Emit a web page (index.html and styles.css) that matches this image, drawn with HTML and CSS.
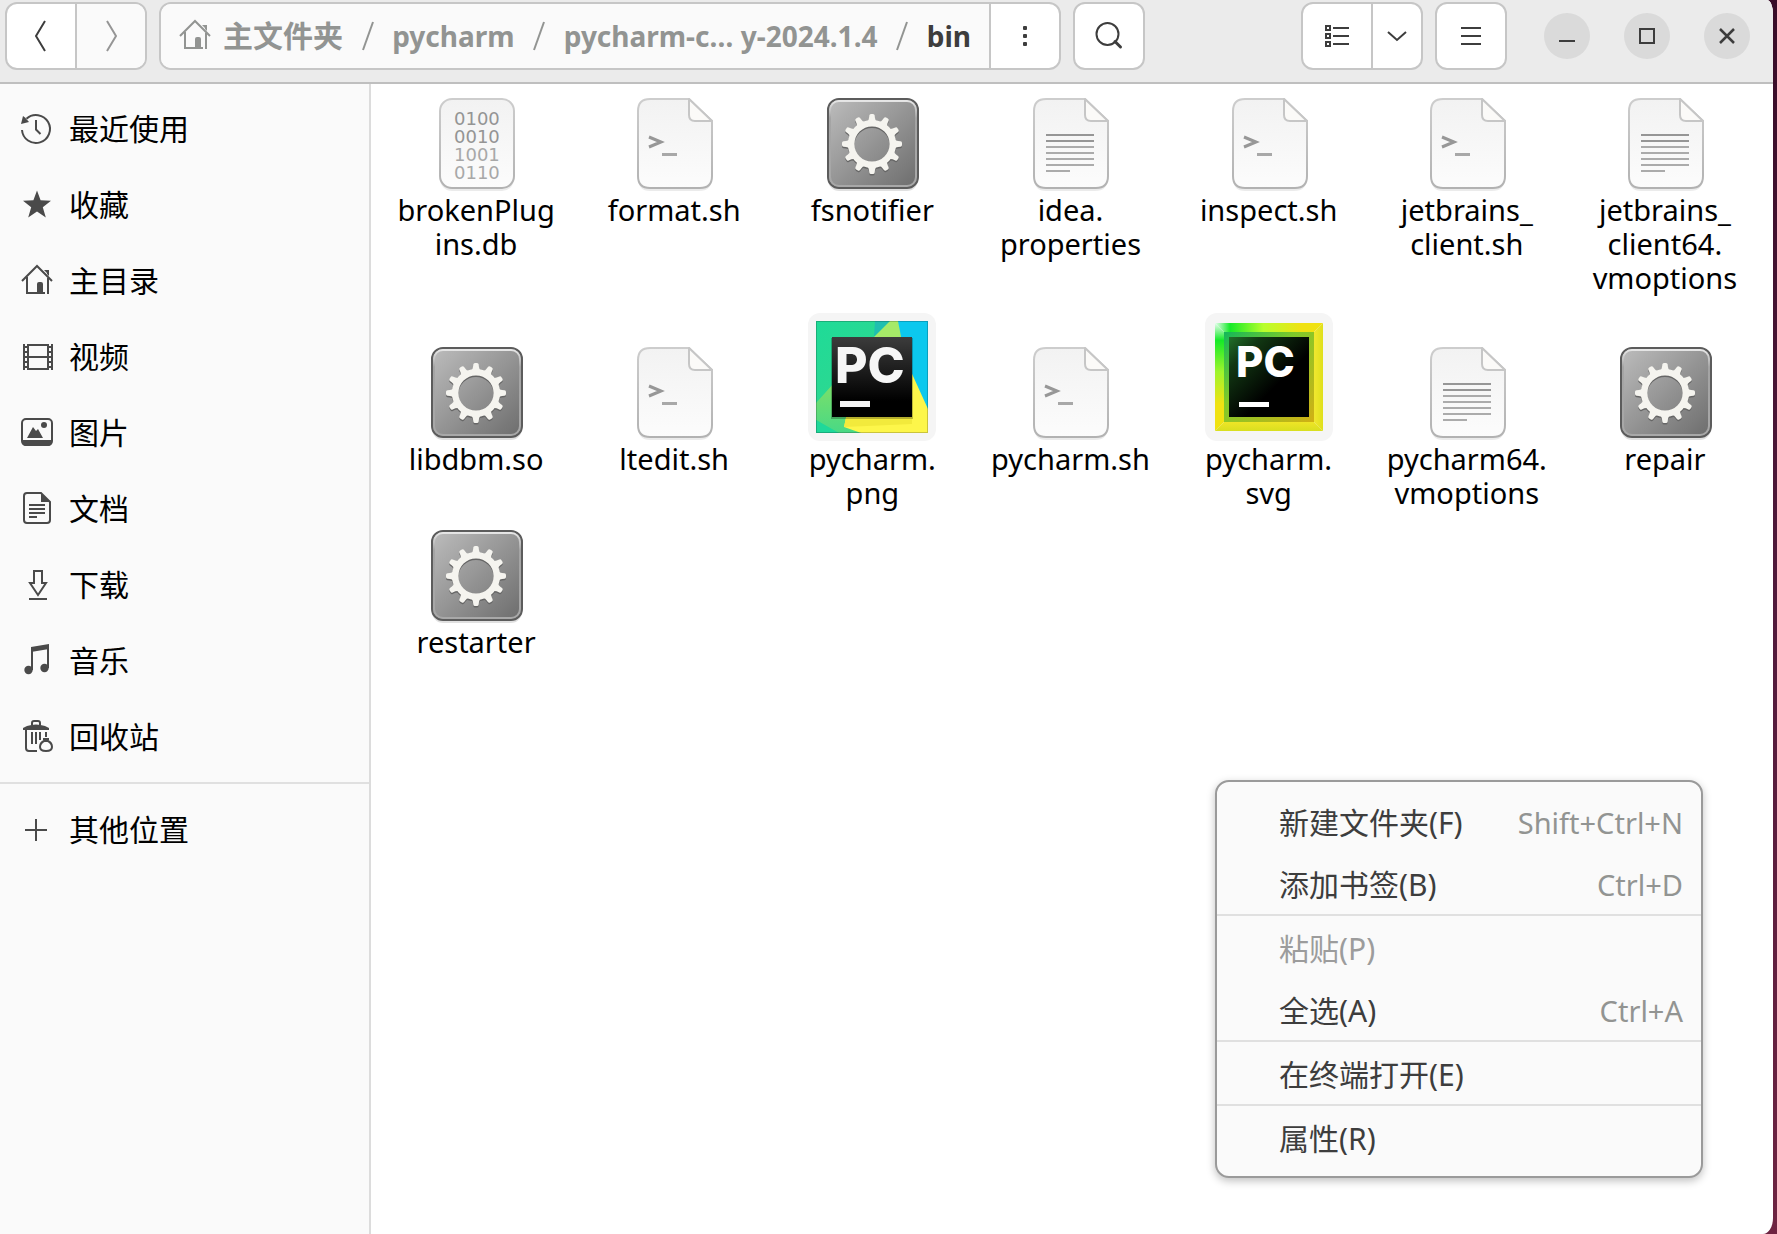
FILE: index.html
```html
<!DOCTYPE html>
<html lang="zh-CN">
<head>
<meta charset="utf-8">
<title>bin</title>
<link rel="stylesheet" href="styles.css">
</head>
<body>
<svg class="defs" aria-hidden="true">
  <defs>
    <linearGradient id="paper" x1="0" y1="0" x2="0" y2="1"><stop offset="0" stop-color="#f2f2f2"/><stop offset="1" stop-color="#fcfcfc"/></linearGradient>
    <linearGradient id="edge" x1="0" y1="0" x2="0" y2="1"><stop offset="0" stop-color="#cdcdcd"/><stop offset="1" stop-color="#b2b2b2"/></linearGradient>
    <linearGradient id="metal" x1="0" y1="0" x2="1" y2="1"><stop offset="0" stop-color="#bdbdbd"/><stop offset="1" stop-color="#6c6c6c"/></linearGradient>
    <linearGradient id="rim" x1="0" y1="0" x2="0" y2="1"><stop offset="0" stop-color="#e6e6e6"/><stop offset="0.2" stop-color="#a4a4a4"/><stop offset="1" stop-color="#a8a8a8"/></linearGradient>
    <linearGradient id="black" x1="0" y1="0" x2="0" y2="1"><stop offset="0" stop-color="#3c3c3c"/><stop offset="0.8" stop-color="#000"/></linearGradient>
    <linearGradient id="green" x1="0" y1="0" x2="1" y2="1"><stop offset="0" stop-color="#1edb98"/><stop offset="1" stop-color="#3fd488"/></linearGradient>
    <linearGradient id="lime" x1="0" y1="0" x2="0" y2="1"><stop offset="0" stop-color="#7ddf68"/><stop offset="1" stop-color="#48d985"/></linearGradient>
    <linearGradient id="frameTop" x1="0" y1="0" x2="1" y2="0"><stop offset="0" stop-color="#e8fff0"/><stop offset="0.14" stop-color="#14ea28"/><stop offset="0.45" stop-color="#b8ff2c"/><stop offset="0.8" stop-color="#f0e212"/></linearGradient>
    <linearGradient id="frameLeft" x1="0" y1="0" x2="0" y2="1"><stop offset="0" stop-color="#e8fff0"/><stop offset="0.16" stop-color="#14ea28"/><stop offset="0.45" stop-color="#9df52c"/><stop offset="0.75" stop-color="#f0e212"/></linearGradient>
    <linearGradient id="frameRight" x1="0" y1="0" x2="1" y2="0"><stop offset="0" stop-color="#fbec3a"/><stop offset="1" stop-color="#dfe01c"/></linearGradient>
    <linearGradient id="frameBottom" x1="0" y1="0" x2="0" y2="1"><stop offset="0" stop-color="#fbe82a"/><stop offset="1" stop-color="#d8df20"/></linearGradient>
    <linearGradient id="innerFrame" x1="0" y1="0" x2="1" y2="1"><stop offset="0" stop-color="#12b85a"/><stop offset="0.4" stop-color="#7fca2a"/><stop offset="1" stop-color="#d2b014"/></linearGradient>
    <linearGradient id="forest" x1="0" y1="0" x2="1" y2="1"><stop offset="0" stop-color="#22702a"/><stop offset="0.2" stop-color="#123813"/><stop offset="0.6" stop-color="#000"/></linearGradient>
  </defs>

  <symbol id="i-recent" viewBox="0 -2 34 34"><path d="M2 16a14 14 0 1 0 4.500-11.300" fill="none" stroke="currentColor" stroke-width="2"/><path d="M1 10 3 2l2 1.500L9 8z"/><path d="M16 6v9.500l4.500 4.500" fill="none" stroke="currentColor" stroke-width="2"/></symbol>
  <symbol id="i-star" viewBox="0 -2 34 34"><path d="M17 .5l3.600 9.700L31 10.800l-8.200 6.400 3 10.300L17 21.600l-8.800 5.900 3-10.300L3 10.800l10.400-.6z"/></symbol>
  <symbol id="i-home" viewBox="0 -2 34 34"><path d="M2 15 17 0l15 15M7 11v16h18" fill="none" stroke="currentColor" stroke-width="2"/><path d="M28 12v16" fill="none" stroke="currentColor" stroke-width="2"/><path d="M24 4h5v6l-2-2V7z"/><path d="M17 27V18q0-2 2-2h2q2 0 2 2v9z"/></symbol>
  <symbol id="i-video" viewBox="0 -2 34 34"><path d="M8 2v26M28 2v26M8 3h20M8 15h20M8 27h20M4 2v26M32 2v26" fill="none" stroke="currentColor" stroke-width="2"/><path d="M4 5h4m-4 5h4m-4 5h4m-4 5h4m-4 5h4M28 5h4m-4 5h4m-4 5h4m-4 5h4m-4 5h4" stroke="currentColor" stroke-width="2"/></symbol>
  <symbol id="i-picture" viewBox="0 -2 34 34"><rect x="2" y="1" width="30" height="26" rx="4" fill="none" stroke="currentColor" stroke-width="2"/><path d="M2 22h30v2q0 4-4 4H6q-4 0-4-4zM7 20l6-11 3 4 2-2 5 9z"/><circle cx="24" cy="7" r="3"/></symbol>
  <symbol id="i-document" viewBox="0 -2 34 34"><path d="M21-1H7q-3 0-3 3v24q0 3 3 3h20q3 0 3-3V8z" fill="none" stroke="currentColor" stroke-width="2"/><path d="M21-1v9h9zM9 10h16v2H9zM9 14h16v2H9zM9 18h16v2H9zM9 22h8v2H9z"/></symbol>
  <symbol id="i-download" viewBox="0 -2 34 34"><path d="M14 1h8v12h4l-8 12-8-12h4zM9 29h18" fill="none" stroke="currentColor" stroke-width="2"/></symbol>
  <symbol id="i-music" viewBox="0 -2 34 34"><path d="M11 1 29-2v5L11 6z"/><path d="M12 4v20M28 0v22" stroke="currentColor" stroke-width="2"/><circle cx="8.500" cy="24" r="4.200"/><circle cx="24.500" cy="22" r="4.200"/></symbol>
  <symbol id="i-trash" viewBox="0 -2 34 34"><path d="M12 3V1q0-2 2-2h4q2 0 2 2v2M6 8v18q0 3 3 3h8" fill="none" stroke="currentColor" stroke-width="2"/><path d="M3 8V6l4-2q9-3 18 0l4 2v2z"/><path d="M12 10v12M16 10v12M20 10v8M26 10v5M23 17h6" stroke="currentColor" stroke-width="2"/><path d="M24 19q-4 2-4 6 0 4 6 4t6-4q0-4-4-6z" fill="none" stroke="currentColor" stroke-width="2"/></symbol>
  <symbol id="i-plus" viewBox="0 -2 34 34"><path d="M16 4v22M5 15h22" stroke="currentColor" stroke-width="2"/></symbol>

  <symbol id="sheet" viewBox="0 0 96 96"><path d="M24 5h38l24 22v55q0 13-13 13H24q-12 0-12-13V17Q12 5 24 5z" fill="#000" opacity=".08"/><path d="M24 3h39l23 22v55q0 12-12 12H24q-12 0-12-12V15Q12 3 24 3z" fill="url(#paper)" stroke="url(#edge)" stroke-width="2"/><path d="M63 3v16q0 6 6 6h17z" fill="#fbfaf8" stroke="#c6c6c6" stroke-width="2" stroke-linejoin="round"/></symbol>
  <symbol id="f-script" viewBox="0 0 96 96"><use href="#sheet"/><path d="M23 41l12 5-12 5" fill="none" stroke="#979797" stroke-width="3"/><path d="M36 58.500h15" stroke="#a8a8a8" stroke-width="3"/></symbol>
  <symbol id="f-text" viewBox="0 0 96 96"><use href="#sheet"/><path d="M24 39h48M24 45h48" stroke="#969696" stroke-width="2"/><path d="M24 51h48M24 57h48M24 63h48M24 69h48M24 75h24" stroke="#ababab" stroke-width="2"/></symbol>
  <symbol id="tooth" viewBox="0 0 96 96"><path d="M42.500 26Q45 25 45.300 19.500 45.500 18 47 18h2q1.500 0 1.700 1.500Q51 25 53.500 26z"/></symbol>
  <symbol id="gear" viewBox="0 0 96 96"><circle cx="48" cy="48" r="20.800" fill="none" stroke="currentColor" stroke-width="6.500"/><g fill="currentColor"><use href="#tooth"/><use href="#tooth" transform="rotate(30 48 48)"/><use href="#tooth" transform="rotate(60 48 48)"/><use href="#tooth" transform="rotate(90 48 48)"/><use href="#tooth" transform="rotate(120 48 48)"/><use href="#tooth" transform="rotate(150 48 48)"/><use href="#tooth" transform="rotate(180 48 48)"/><use href="#tooth" transform="rotate(210 48 48)"/><use href="#tooth" transform="rotate(240 48 48)"/><use href="#tooth" transform="rotate(270 48 48)"/><use href="#tooth" transform="rotate(300 48 48)"/><use href="#tooth" transform="rotate(330 48 48)"/></g></symbol>
  <symbol id="f-program" viewBox="0 0 96 96"><rect x="4" y="5" width="90" height="90" rx="11" fill="#000" opacity=".12"/><rect x="4" y="3" width="90" height="89" rx="11" fill="url(#metal)" stroke="#5c5c5c" stroke-width="2"/><rect x="6" y="5" width="86" height="85" rx="9" fill="none" stroke="url(#rim)" stroke-width="2"/><use href="#gear" y="1.500" color="#666"/><use href="#gear" color="#f5f4ef"/></symbol>
</svg>

<div class="window">
  <header class="toolbar">
    <div class="group">
      <button class="tool" aria-label="后退"><svg width="34" height="34" viewBox="0 0 34 34"><path d="M21 2 12 17l9 15" fill="none" stroke="currentColor" stroke-width="2"/></svg></button>
      <button class="tool" aria-label="前进" disabled><svg width="34" height="34" viewBox="0 0 34 34"><path d="M13 2l9 15-9 15" fill="none" stroke="currentColor" stroke-width="2"/></svg></button>
    </div>
    <div class="group pathbar">
      <nav class="crumbs" aria-label="路径">
        <a class="crumb home" href="#"><svg class="icon"><use href="#i-home"/></svg><span>主文件夹</span></a>
        <svg class="slash" viewBox="0 0 12 30"><path d="M1 29 11 1"/></svg>
        <a class="crumb" href="#">pycharm</a>
        <svg class="slash" viewBox="0 0 12 30"><path d="M1 29 11 1"/></svg>
        <a class="crumb" href="#">pycharm-c… y-2024.1.4</a>
        <svg class="slash" viewBox="0 0 12 30"><path d="M1 29 11 1"/></svg>
        <a class="crumb current" href="#" aria-current="page">bin</a>
      </nav>
      <button class="tool" aria-label="更多"><svg width="4" height="20" viewBox="0 0 4 20"><rect width="4" height="4" rx="1"/><rect y="8" width="4" height="4" rx="1"/><rect y="16" width="4" height="4" rx="1"/></svg></button>
    </div>
    <div class="group">
      <button class="tool" aria-label="搜索"><svg width="30" height="30" viewBox="0 0 30 30"><circle cx="13.500" cy="13" r="11" fill="none" stroke="currentColor" stroke-width="2"/><path d="M21 20.500l5.500 5.500" stroke="currentColor" stroke-width="3" stroke-linecap="round"/></svg></button>
    </div>
    <div class="spacer"></div>
    <div class="group">
      <button class="tool" aria-label="列表视图"><svg width="24" height="24" viewBox="0 0 24 24"><path d="M1 2h4v4H1zM1 10h4v4H1zM1 18h4v4H1zM8 4h16M8 12h16M8 20h16" fill="none" stroke="currentColor" stroke-width="2"/></svg></button>
      <button class="tool narrow" aria-label="视图选项"><svg width="20" height="12" viewBox="0 0 20 12"><path d="M1 2l9 8 9-8" fill="none" stroke="currentColor" stroke-width="2"/></svg></button>
    </div>
    <div class="group">
      <button class="tool" aria-label="主菜单"><svg width="20" height="20" viewBox="0 0 20 20"><path d="M0 2h20M0 10h20M0 18h20" stroke="currentColor" stroke-width="2"/></svg></button>
    </div>
    <div class="controls">
      <button class="control" aria-label="最小化"><svg width="16" height="16" viewBox="0 0 16 16"><path d="M0 13h16" stroke="currentColor" stroke-width="2"/></svg></button>
      <button class="control" aria-label="最大化"><svg width="16" height="16" viewBox="0 0 16 16"><rect x="1" y="1" width="14" height="14" fill="none" stroke="currentColor" stroke-width="2"/></svg></button>
      <button class="control" aria-label="关闭"><svg width="16" height="16" viewBox="0 0 16 16"><path d="M1 1l14 14M15 1 1 15" stroke="currentColor" stroke-width="2.500"/></svg></button>
    </div>
  </header>

  <div class="body">
    <nav class="sidebar" aria-label="位置">
      <ul class="places">
        <li><a class="place" href="#"><svg class="icon"><use href="#i-recent"/></svg>最近使用</a></li>
        <li><a class="place" href="#"><svg class="icon"><use href="#i-star"/></svg>收藏</a></li>
        <li><a class="place" href="#"><svg class="icon"><use href="#i-home"/></svg>主目录</a></li>
        <li><a class="place" href="#"><svg class="icon"><use href="#i-video"/></svg>视频</a></li>
        <li><a class="place" href="#"><svg class="icon"><use href="#i-picture"/></svg>图片</a></li>
        <li><a class="place" href="#"><svg class="icon"><use href="#i-document"/></svg>文档</a></li>
        <li><a class="place" href="#"><svg class="icon"><use href="#i-download"/></svg>下载</a></li>
        <li><a class="place" href="#"><svg class="icon"><use href="#i-music"/></svg>音乐</a></li>
        <li><a class="place" href="#"><svg class="icon"><use href="#i-trash"/></svg>回收站</a></li>
      </ul>
      <ul class="places others">
        <li><a class="place" href="#"><svg class="icon"><use href="#i-plus"/></svg>其他位置</a></li>
      </ul>
    </nav>

    <main class="content">
      <ul class="files">
        <li class="file">
          <svg class="file-icon" viewBox="0 0 96 96">
            <rect x="12" y="5" width="74" height="90" rx="12" fill="#000" opacity=".08"/>
            <rect x="12" y="3" width="74" height="89" rx="12" fill="url(#paper)" stroke="url(#edge)" stroke-width="2"/>
            <g class="digits">
              <text x="26" y="29">0100</text>
              <text x="26" y="47">0010</text>
              <text class="faded" x="26" y="65">1001</text>
              <text class="faded" x="26" y="83">0110</text>
            </g>
          </svg>
          <span class="name">brokenPlug<br>ins.db</span></li>
        <li class="file"><svg class="file-icon"><use href="#f-script"/></svg><span class="name">format.sh</span></li>
        <li class="file"><svg class="file-icon"><use href="#f-program"/></svg><span class="name">fsnotifier</span></li>
        <li class="file"><svg class="file-icon"><use href="#f-text"/></svg><span class="name">idea.<br>properties</span></li>
        <li class="file"><svg class="file-icon"><use href="#f-script"/></svg><span class="name">inspect.sh</span></li>
        <li class="file"><svg class="file-icon"><use href="#f-script"/></svg><span class="name">jetbrains_<br>client.sh</span></li>
        <li class="file"><svg class="file-icon"><use href="#f-text"/></svg><span class="name">jetbrains_<br>client64.<br>vmoptions</span></li>
        <li class="file"><svg class="file-icon"><use href="#f-program"/></svg><span class="name">libdbm.so</span></li>
        <li class="file"><svg class="file-icon"><use href="#f-script"/></svg><span class="name">ltedit.sh</span></li>
        <li class="file">
          <svg class="thumb" viewBox="0 0 128 128">
            <rect x="8" y="8" width="112" height="112" fill="url(#green)"/>
            <path d="M67 8h53v90L98 50z" fill="#0cc8ee"/>
            <path d="M67 8h16L66 24z" fill="#1fbfb0"/>
            <path d="M64 26 82 8h8l5 26z" fill="#a6ea68"/>
            <path d="M8 90l18-20 14 34-4 10 17 6H30L8 107z" fill="url(#lime)"/>
            <path d="M8 107l23 13H8z" fill="#1fd89a"/>
            <path d="M100 52l20 44v24H53l-17-6 3-14z" fill="#fdf64a"/>
            <path d="M36 114l3-14h65v11z" fill="#f2ea3c"/>
            <rect x="8.500" y="8.500" width="111" height="111" fill="none" stroke="#000" stroke-opacity=".2"/>
            <rect x="23" y="25" width="82" height="81" opacity=".25"/>
            <rect x="24" y="24" width="80" height="80" fill="url(#black)"/>
            <text class="logo-large" x="27" y="70">PC</text>
            <rect x="32" y="88" width="30" height="6" fill="#f4f4f4"/>
          </svg>
          <span class="name">pycharm.<br>png</span></li>
        <li class="file"><svg class="file-icon"><use href="#f-script"/></svg><span class="name">pycharm.sh</span></li>
        <li class="file">
          <svg class="thumb" viewBox="0 0 128 128">
            <path d="M10 10h108l-14 14H24z" fill="url(#frameTop)"/>
            <path d="M10 10l14 14v80l-14 14z" fill="url(#frameLeft)"/>
            <path d="M118 10v108l-14-14V24z" fill="url(#frameRight)"/>
            <path d="M10 118l14-14h80l14 14z" fill="url(#frameBottom)"/>
            <rect x="19" y="19" width="90" height="90" fill="url(#innerFrame)"/>
            <rect x="24" y="24" width="80" height="80" fill="url(#forest)"/>
            <text class="logo-small" x="31" y="64">PC</text>
            <rect x="34" y="89" width="30" height="5" fill="#fff"/>
          </svg>
          <span class="name">pycharm.<br>svg</span></li>
        <li class="file"><svg class="file-icon"><use href="#f-text"/></svg><span class="name">pycharm64.<br>vmoptions</span></li>
        <li class="file"><svg class="file-icon"><use href="#f-program"/></svg><span class="name">repair</span></li>
        <li class="file"><svg class="file-icon"><use href="#f-program"/></svg><span class="name">restarter</span></li>
      </ul>

      <div class="menu" role="menu">
        <button class="item" role="menuitem">新建文件夹(F)<kbd>Shift+Ctrl+N</kbd></button>
        <button class="item" role="menuitem">添加书签(B)<kbd>Ctrl+D</kbd></button>
        <hr>
        <button class="item" role="menuitem" disabled>粘贴(P)</button>
        <button class="item" role="menuitem">全选(A)<kbd>Ctrl+A</kbd></button>
        <hr>
        <button class="item" role="menuitem">在终端打开(E)</button>
        <hr>
        <button class="item" role="menuitem">属性(R)</button>
      </div>
    </main>
  </div>
</div>
</body>
</html>
```
FILE: styles.css
```css
* {
  box-sizing: border-box;
}

body {
  margin: 0;
  min-height: 100vh;
  background: linear-gradient(#380c28, #521a3c 50%, #6e2442);
  font-family: "Noto Sans", "Noto Sans CJK SC", sans-serif;
  font-size: 28px;
  color: #000;
}

button {
  margin: 0;
  padding: 0;
  border: 0;
  background: none;
  font: inherit;
  color: inherit;
}

a {
  color: inherit;
  text-decoration: none;
}

ul {
  margin: 0;
  padding: 0;
  list-style: none;
}

svg {
  display: block;
  fill: currentColor;
}

.defs {
  position: absolute;
  width: 0;
  height: 0;
}

.window {
  display: flex;
  flex-direction: column;
  min-height: 100vh;
  margin-right: 4px;
  overflow: hidden;
  border-radius: 0 6px 10px 0 / 0 14px 16px 0;
  background: #fff;
}

/* Toolbar */

.toolbar {
  display: flex;
  align-items: center;
  gap: 12px;
  padding: 2px 23px 12px 5px;
  border-bottom: 2px solid #bfbfbf;
  background: #ebebeb;
  color: #3d3d3d;
}

.group {
  display: flex;
  flex: none;
  height: 68px;
  overflow: hidden;
  border: 2px solid #c6c6c6;
  border-radius: 12px;
  background: #fff;
}

.tool {
  display: flex;
  flex: none;
  align-items: center;
  justify-content: center;
  width: 68px;
}

.tool.narrow {
  width: 48px;
}

.tool + .tool,
.crumbs + .tool {
  width: 70px;
  border-left: 2px solid #c6c6c6;
}

.tool + .tool.narrow {
  width: 50px;
}

.tool:disabled {
  background: #fafafa;
  color: #959595;
}

.group.pathbar {
  flex: 0 1 902px;
  min-width: 0;
}

.crumbs {
  display: flex;
  flex: 1;
  align-items: center;
  justify-content: space-between;
  min-width: 0;
  padding: 0 18px 0 17px;
  background: #fafafa;
  color: #929492;
  font-weight: 700;
  line-height: 40px;
  white-space: nowrap;
}

.crumb.home {
  display: flex;
  align-items: center;
  gap: 11px;
  font-size: 30px;
}

.crumb.current {
  color: #3d3d3d;
}

.slash {
  flex: none;
  width: 12px;
  height: 30px;
  fill: none;
  stroke: currentColor;
  stroke-width: 2;
}

.spacer {
  flex: 1;
}

.controls {
  display: flex;
  gap: 34px;
  margin-left: 25px;
}

.control {
  display: flex;
  align-items: center;
  justify-content: center;
  width: 46px;
  height: 46px;
  border-radius: 50%;
  background: #dadada;
}

/* Sidebar */

.body {
  display: flex;
  flex: 1;
}

.sidebar {
  flex: none;
  width: 371px;
  border-right: 2px solid #dcdcdc;
  background: #fafafa;
}

.places {
  padding: 7px 0;
}

.places.others {
  padding-top: 8px;
  border-top: 2px solid #e0e0e0;
}

.place {
  display: flex;
  align-items: center;
  gap: 15px;
  height: 76px;
  padding-left: 20px;
  font-size: 30px;
  line-height: 40px;
}

.icon {
  flex: none;
  width: 34px;
  height: 34px;
}

.place .icon {
  color: #4a4a4a;
}

/* Files */

.content {
  position: relative;
  flex: 1;
  min-width: 0;
}

.files {
  display: grid;
  grid-template-columns: repeat(7, 1fr);
  padding: 12px 9px 0 6px;
}

.file {
  display: grid;
  grid-row: span 2;
  grid-template-rows: subgrid;
  justify-items: center;
}

.file-icon {
  align-self: end;
  width: 96px;
  height: 96px;
}

.thumb {
  align-self: end;
  width: 128px;
  height: 128px;
  border-radius: 12px;
  background: #f5f5f5;
}

.name {
  padding: 1px 0 18px;
  font-size: 29px;
  line-height: 34px;
  text-align: center;
}

.digits {
  font-family: "DejaVu Sans", sans-serif;
  font-size: 18px;
  fill: #949494;
}

.digits .faded {
  fill: #a8a8a8;
}

.logo-large,
.logo-small {
  font-family: Inter, sans-serif;
  font-weight: 800;
}

.logo-large {
  font-size: 50px;
  fill: #f6f6f6;
}

.logo-small {
  font-size: 42px;
  fill: #fff;
}

/* Context menu */

.menu {
  position: absolute;
  top: 696px;
  right: 70px;
  width: 488px;
  padding: 8px 0;
  border: 2px solid #9a9a9a;
  border-radius: 14px;
  background: #fafafa;
  box-shadow: 0 3px 8px rgba(0, 0, 0, 0.25);
  color: #3d3d3d;
}

.menu hr {
  height: 2px;
  margin: 0;
  border: 0;
  background: #e0e0e0;
}

.item {
  display: flex;
  align-items: center;
  justify-content: space-between;
  width: 100%;
  height: 62px;
  padding: 4px 18px 0 62px;
  font-size: 30px;
  line-height: 40px;
}

.item:disabled {
  color: #9c9c9c;
}

.item kbd {
  font-family: inherit;
  font-size: 29px;
  color: #929492;
}
```
